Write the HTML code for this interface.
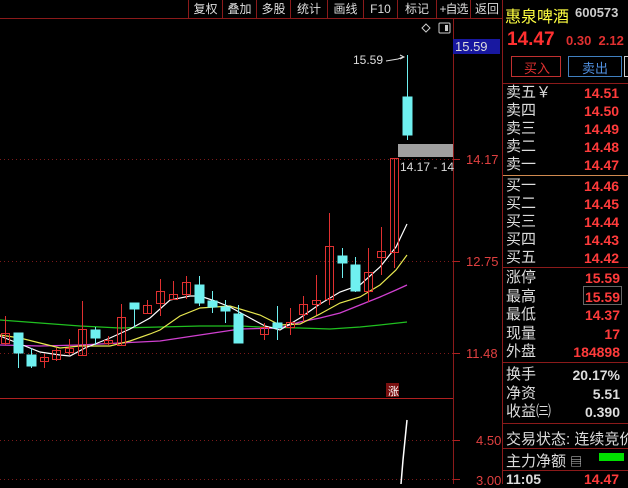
<!DOCTYPE html>
<html><head><meta charset="utf-8"><style>
body{margin:0;width:628px;height:484px;background:#000;overflow:hidden;position:relative;font-family:"Liberation Sans","Noto Sans CJK SC",sans-serif}
.a{position:absolute;white-space:nowrap}
.tb{position:absolute;top:0;height:18px;color:#ddd;font-size:12px;line-height:18px;text-align:center;border-left:1px solid #8b1a1a;white-space:nowrap;overflow:hidden}
.r{color:#ff3b3b;font-weight:bold;font-size:14px}
.lab{color:#ddd;font-size:15px}
</style></head><body>
<svg class="a" style="left:0;top:0" width="628" height="484">
<g stroke="#8b1a1a" stroke-width="1">
<line x1="0" y1="18.5" x2="502" y2="18.5"/>
<line x1="453.5" y1="19" x2="453.5" y2="484"/>
<line x1="502.5" y1="0" x2="502.5" y2="484"/>
<line x1="0" y1="398.5" x2="453" y2="398.5" stroke="#b02020"/>
<line x1="503" y1="83.5" x2="628" y2="83.5"/>
<line x1="503" y1="175.5" x2="628" y2="175.5" stroke="#d08a50"/>
<line x1="503" y1="267.5" x2="628" y2="267.5"/>
<line x1="503" y1="362.5" x2="628" y2="362.5"/>
<line x1="503" y1="423.5" x2="628" y2="423.5"/>
<line x1="503" y1="448.5" x2="628" y2="448.5"/>
<line x1="503" y1="470.5" x2="628" y2="470.5"/>
</g>
<g stroke="#7a1a1a" stroke-dasharray="1 3">
<line x1="0" y1="159.5" x2="453" y2="159.5"/>
<line x1="0" y1="261.5" x2="453" y2="261.5"/>
<line x1="0" y1="353.5" x2="453" y2="353.5"/>
<line x1="0" y1="440.5" x2="453" y2="440.5"/>
<line x1="0" y1="479.5" x2="453" y2="479.5"/>
</g>
<g stroke="#b02020"><line x1="453" y1="159.5" x2="460" y2="159.5"/><line x1="453" y1="261.5" x2="460" y2="261.5"/><line x1="453" y1="353.5" x2="460" y2="353.5"/><line x1="453" y1="440.5" x2="460" y2="440.5"/><line x1="453" y1="479.5" x2="460" y2="479.5"/></g>
<polyline fill="none" stroke="#20c020" stroke-width="1.3" points="0,320 40,323 80,326 120,328 160,327 200,326 240,326 260,327 300,328 330,329 360,327 380,325 407,322"/>
<polyline fill="none" stroke="#d040d0" stroke-width="1.3" points="0,345 40,346 80,345 120,343 160,341 200,335 240,329 280,328 300,322 320,318 340,313 360,305 380,297 396,290 407,285"/>
<polyline fill="none" stroke="#e8e850" stroke-width="1.2" points="0,335 20,338 40,343 60,348 80,346 110,346 130,341 150,334 160,330 180,316 200,308 230,306 260,315 280,325 300,324 320,314 340,303 360,297 380,285 396,270 407,255"/>
<polyline fill="none" stroke="#fff" stroke-width="1.2" points="0,336 20,344 40,352 60,355 70,356 85,348 110,338 130,329 150,318 170,300 190,296 200,296 215,301 230,307 250,318 265,326 280,330 300,318 320,304 340,292 360,285 380,267 396,247 407,224"/>
<g stroke="#e03030" fill="none" stroke-width="1">
<line x1="5.5" y1="316" x2="5.5" y2="345"/><rect x="1.5" y="333.5" width="8" height="10"/>
<line x1="44.5" y1="354" x2="44.5" y2="368"/><rect x="40.5" y="357.5" width="8" height="4"/>
<line x1="56.5" y1="348" x2="56.5" y2="361"/><rect x="52.5" y="350.5" width="8" height="9"/>
<line x1="69.5" y1="339" x2="69.5" y2="355"/><rect x="65.5" y="348.5" width="8" height="4"/>
<line x1="82.5" y1="301" x2="82.5" y2="355"/><rect x="78.5" y="329.5" width="8" height="26"/>
<line x1="108.5" y1="336" x2="108.5" y2="345"/><rect x="104.5" y="340.5" width="8" height="3"/>
<line x1="121.5" y1="304" x2="121.5" y2="346"/><rect x="117.5" y="317.5" width="8" height="28"/>
<line x1="147.5" y1="300" x2="147.5" y2="313"/><rect x="143.5" y="305.5" width="8" height="8"/>
<line x1="160.5" y1="279" x2="160.5" y2="316"/><rect x="156.5" y="291.5" width="8" height="12"/>
<line x1="173.5" y1="281" x2="173.5" y2="299"/><rect x="169.5" y="294.5" width="8" height="5"/>
<line x1="186.5" y1="276" x2="186.5" y2="299"/><rect x="182.5" y="282.5" width="8" height="12"/>
<line x1="264.5" y1="323" x2="264.5" y2="340"/><rect x="260.5" y="327.5" width="8" height="7"/>
<line x1="290.5" y1="308" x2="290.5" y2="335"/><rect x="286.5" y="322.5" width="8" height="5"/>
<line x1="303.5" y1="296" x2="303.5" y2="322"/><rect x="299.5" y="304.5" width="8" height="10"/>
<line x1="316.5" y1="275" x2="316.5" y2="315"/><rect x="312.5" y="300.5" width="8" height="4"/>
<line x1="329.5" y1="213" x2="329.5" y2="305"/><rect x="325.5" y="246.5" width="8" height="53"/>
<line x1="368.5" y1="248" x2="368.5" y2="302"/><rect x="364.5" y="272.5" width="8" height="19"/>
<line x1="381.5" y1="227" x2="381.5" y2="275"/><rect x="377.5" y="251.5" width="8" height="6"/>
<line x1="394.5" y1="158" x2="394.5" y2="268"/><rect x="390.5" y="158.5" width="8" height="94"/>
</g>
<g fill="#6ff0f0" stroke="#6ff0f0">
<line x1="18.5" y1="333" x2="18.5" y2="368"/><rect x="14" y="333" width="9" height="20"/>
<line x1="31.5" y1="348" x2="31.5" y2="368"/><rect x="27" y="355" width="9" height="11"/>
<line x1="95.5" y1="327" x2="95.5" y2="345"/><rect x="91" y="330" width="9" height="8"/>
<line x1="134.5" y1="303" x2="134.5" y2="327"/><rect x="130" y="303" width="9" height="6"/>
<line x1="199.5" y1="276" x2="199.5" y2="306"/><rect x="195" y="285" width="9" height="18"/>
<line x1="212.5" y1="291" x2="212.5" y2="313"/><rect x="208" y="301" width="9" height="6"/>
<line x1="225.5" y1="300" x2="225.5" y2="323"/><rect x="221" y="307" width="9" height="4"/>
<line x1="238.5" y1="305" x2="238.5" y2="343"/><rect x="234" y="314" width="9" height="29"/>
<line x1="277.5" y1="306" x2="277.5" y2="340"/><rect x="273" y="323" width="9" height="5"/>
<line x1="342.5" y1="248" x2="342.5" y2="278"/><rect x="338" y="256" width="9" height="7"/>
<line x1="355.5" y1="257" x2="355.5" y2="292"/><rect x="351" y="265" width="9" height="26"/>
<line x1="407.5" y1="55" x2="407.5" y2="140"/><rect x="403" y="97" width="9" height="38"/>
</g>
<polyline fill="none" stroke="#ddd" points="386,61 398,59 403,57"/><polyline fill="none" stroke="#ddd" points="400,55 404,57 400,59"/>
<rect x="398" y="144" width="55" height="13" fill="#a0a0a0"/>
<polyline fill="none" stroke="#fff" stroke-width="1.5" points="407,420 405,440 403,460 401,484"/>
<rect x="386" y="383" width="13" height="14" fill="#7a1010"/>
<rect x="453" y="39" width="47" height="15" fill="#1818a0"/>
<path d="M426 24 L430 28 L426 32 L422 28 Z" fill="none" stroke="#ccc"/>
<rect x="439" y="23" width="11" height="10" fill="none" stroke="#ccc" rx="1"/><rect x="445" y="25" width="3" height="6" fill="#ccc"/>
<rect x="511.5" y="56.5" width="49" height="20" fill="none" stroke="#c03030"/>
<rect x="568.5" y="56.5" width="53" height="20" fill="none" stroke="#4080c0"/>
<rect x="624.5" y="56.5" width="8" height="20" fill="none" stroke="#ccc"/>
<rect x="583.5" y="286.5" width="38" height="18" fill="none" stroke="#666"/>
<rect x="599" y="453" width="25" height="8" fill="#00e000"/>
</svg>
<div class="tb" style="left:188px;width:33px">复权</div>
<div class="tb" style="left:222px;width:33px">叠加</div>
<div class="tb" style="left:256px;width:33px">多股</div>
<div class="tb" style="left:290px;width:36px">统计</div>
<div class="tb" style="left:327px;width:35px">画线</div>
<div class="tb" style="left:363px;width:33px">F10</div>
<div class="tb" style="left:397px;width:38px">标记</div>
<div class="tb" style="left:436px;width:33px;letter-spacing:-1px">+自选</div>
<div class="tb" style="left:470px;width:32px">返回</div>
<div class="a" style="left:353px;top:53px;color:#ddd;font-size:12px">15.59</div>
<div class="a" style="left:400px;top:160px;color:#ddd;font-size:12px">14.17 - 14</div>
<div class="a" style="left:388px;top:383px;color:#fff;font-size:11px">涨</div>
<div class="a" style="left:455px;top:39px;color:#ddd;font-size:13px">15.59</div>
<div class="a" style="left:466px;top:152px;color:#e04040;font-size:13px">14.17</div>
<div class="a" style="left:466px;top:254px;color:#e04040;font-size:13px">12.75</div>
<div class="a" style="left:466px;top:346px;color:#e04040;font-size:13px">11.48</div>
<div class="a" style="left:476px;top:433px;color:#e04040;font-size:13px">4.50</div>
<div class="a" style="left:476px;top:473px;color:#e04040;font-size:13px">3.00</div>
<div class="a" style="left:505px;top:3px;color:#ffff40;font-size:16px">惠泉啤酒</div>
<div class="a" style="left:575px;top:5px;color:#ccc;font-size:13px;font-weight:bold">600573</div>
<div class="a" style="left:507px;top:29px;color:#ff3030;font-size:19px;font-weight:bold">14.47</div>
<div class="a" style="left:566px;top:33px;color:#e03030;font-size:13px;font-weight:bold">0.30&nbsp; 2.12</div>
<div class="a" style="left:524px;top:58px;color:#e03030;font-size:13px">买入</div>
<div class="a" style="left:582px;top:58px;color:#5090e0;font-size:13px">卖出</div>
<div class="a lab" style="left:506px;top:84px;line-height:18px">卖五￥<br>卖四<br>卖三<br>卖二<br>卖一</div>
<div class="a r" style="left:584px;top:84px;line-height:18px">14.51<br>14.50<br>14.49<br>14.48<br>14.47</div>
<div class="a lab" style="left:506px;top:177px;line-height:18px">买一<br>买二<br>买三<br>买四<br>买五</div>
<div class="a r" style="left:584px;top:177px;line-height:18px">14.46<br>14.45<br>14.44<br>14.43<br>14.42</div>
<div class="a lab" style="left:506px;top:269px;line-height:18.5px">涨停<br>最高<br>最低<br>现量<br>外盘</div>
<div class="a r" style="left:572px;top:269px;line-height:18.5px;text-align:right;width:48px">15.59<br>15.59<br>14.37<br>17<br>184898</div>
<div class="a lab" style="left:506px;top:366px;line-height:18.5px">换手<br>净资<br>收益㈢</div>
<div class="a" style="left:572px;top:366px;line-height:18.5px;text-align:right;width:48px;color:#ddd;font-size:14px;font-weight:bold">20.17%<br>5.51<br>0.390</div>
<div class="a lab" style="left:506px;top:428px">交易状态: 连续竞价</div>
<div class="a lab" style="left:506px;top:450px">主力净额 <span style="font-size:12px">▤</span></div>
<div class="a" style="left:506px;top:471px;color:#ddd;font-size:14px;font-weight:bold">11:05</div>
<div class="a r" style="left:584px;top:471px">14.47</div>
</body></html>
